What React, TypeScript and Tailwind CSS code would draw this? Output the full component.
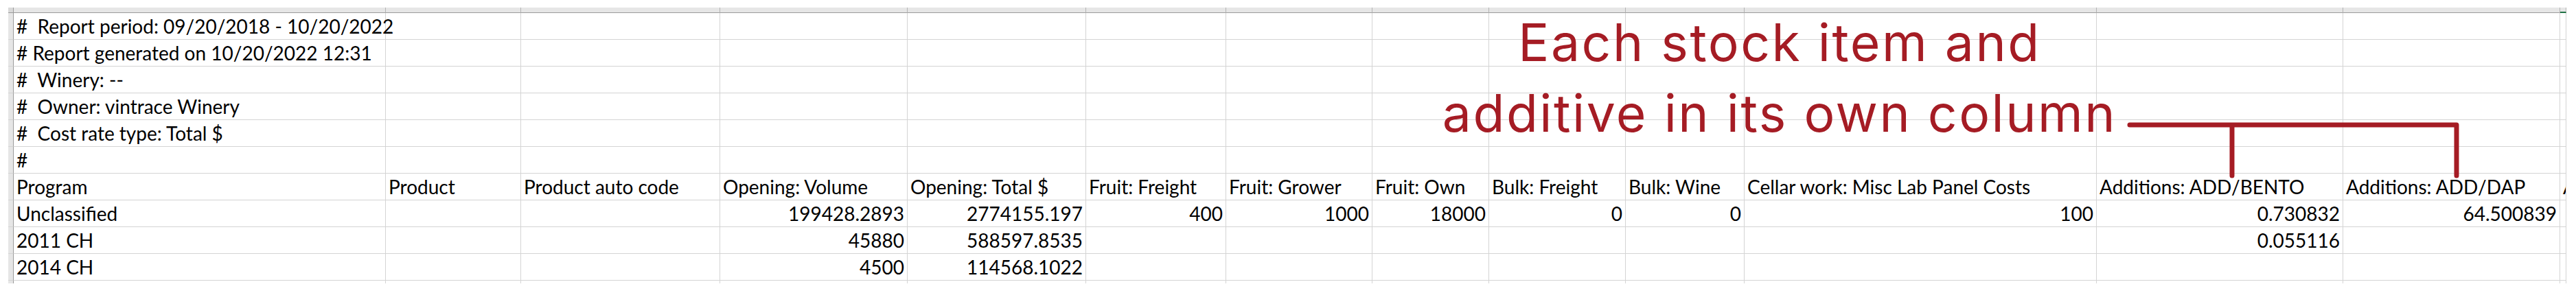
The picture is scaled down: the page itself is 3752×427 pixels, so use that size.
import clsx from "clsx";

type Cell = { text?: string; right?: boolean };

const cols = 14;

const rows: Cell[][] = [
  [{ text: "#  Report period: 09/20/2018 - 10/20/2022" }],
  [{ text: "# Report generated on 10/20/2022 12:31" }],
  [{ text: "#  Winery: --" }],
  [{ text: "#  Owner: vintrace Winery" }],
  [{ text: "#  Cost rate type: Total $" }],
  [{ text: "#" }],
  [
    { text: "Program" },
    { text: "Product" },
    { text: "Product auto code" },
    { text: "Opening: Volume" },
    { text: "Opening: Total $" },
    { text: "Fruit: Freight" },
    { text: "Fruit: Grower" },
    { text: "Fruit: Own" },
    { text: "Bulk: Freight" },
    { text: "Bulk: Wine" },
    { text: "Cellar work: Misc Lab Panel Costs" },
    { text: "Additions: ADD/BENTO" },
    { text: "Additions: ADD/DAP" },
    { text: "A" },
  ],
  [
    { text: "Unclassified" },
    {},
    {},
    { text: "199428.2893", right: true },
    { text: "2774155.197", right: true },
    { text: "400", right: true },
    { text: "1000", right: true },
    { text: "18000", right: true },
    { text: "0", right: true },
    { text: "0", right: true },
    { text: "100", right: true },
    { text: "0.730832", right: true },
    { text: "64.500839", right: true },
  ],
  [
    { text: "2011 CH" },
    {},
    {},
    { text: "45880", right: true },
    { text: "588597.8535", right: true },
    {},
    {},
    {},
    {},
    {},
    {},
    { text: "0.055116", right: true },
  ],
  [
    { text: "2014 CH" },
    {},
    {},
    { text: "4500", right: true },
    { text: "114568.1022", right: true },
  ],
];

const gridCols =
  "grid grid-cols-[8px_542px_197px_290px_273px_260px_204px_213px_170px_199px_173px_513px_359px_316px_9px]";

export default function App() {
  const blank = Array.from({ length: cols });

  return (
    <main className="relative w-[3752px] h-[427px] bg-white overflow-hidden pt-[11px] pl-[12px] font-['Lato',_sans-serif] text-black">
      <div className={gridCols}>
        {/* column header strip */}
        <div className="h-[8px] bg-[#d9d9d9] border-r border-b border-r-[#9b9b9b] border-b-[#9b9b9b]" />
        {blank.map((_, i) => (
          <div
            key={i}
            className={clsx(
              "h-[8px] bg-[#e6e6e6] border-r border-r-[#b4b4b4] border-b border-b-[#9b9b9b]",
              i == cols - 1 && "border-b-2 border-b-[#217346]"
            )}
          />
        ))}

        {rows.map((row, r) => (
          <div key={r} className="contents">
            <div className="h-[39px] bg-[#e6e6e6] border-r border-r-[#9b9b9b] border-b border-b-[#d4d4d4]" />
            {blank.map((_, c) => {
              const cell = row[c] ?? {};
              return (
                <div
                  key={c}
                  className={clsx(
                    "h-[39px] flex items-end pb-[5px] px-[4px] border-r border-b border-[#d4d4d4] whitespace-pre text-[28px] leading-[28px]",
                    cell.right && "justify-end",
                    c == cols - 1 && "overflow-hidden"
                  )}
                >
                  {cell.text}
                </div>
              );
            })}
          </div>
        ))}

        <div className="h-[4px] bg-[#e6e6e6] border-r border-r-[#9b9b9b]" />
        {blank.map((_, i) => (
          <div key={i} className="h-[4px] border-r border-[#d4d4d4]" />
        ))}
      </div>

      {/* callout */}
      <div className="absolute left-[2042px] top-[10px] w-[1100px] text-center text-[75px] leading-[103px] tracking-[2.5px] text-[#a51c24] font-['Inter',_sans-serif] font-normal">
        <div>Each stock item and</div>
        <div>additive in its own column</div>
      </div>
      <svg
        className="absolute left-0 top-0"
        width={3752}
        height={427}
        viewBox="0 0 3752 427"
        fill="none"
      >
        <path
          d="M3102 182 H3578 V256 M3251 182 V256"
          stroke="#a51c24"
          strokeWidth={7}
          strokeLinecap="round"
          strokeLinejoin="round"
        />
      </svg>
    </main>
  );
}
